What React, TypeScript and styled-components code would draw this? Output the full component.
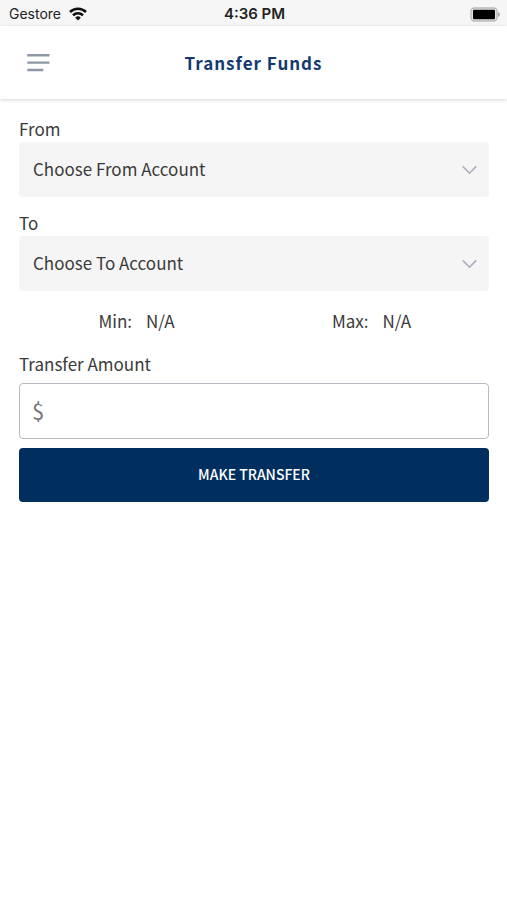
import React, { useState } from "react";
import styled, { createGlobalStyle } from "styled-components";

const GlobalStyle = createGlobalStyle`
  *, *::before, *::after { box-sizing: border-box; }
  body {
    margin: 0;
    background: #ffffff;
    color: #3a3a3a;
    font-family: "Noto Sans CJK SC", "Open Sans", sans-serif;
  }
  button, input, select { font: inherit; color: inherit; margin: 0; }
`;

const StatusBar = styled.div`
  display: grid;
  grid-template-columns: 1fr auto 1fr;
  align-items: center;
  height: 26px;
  padding: 2px 7px 0 9px;
  background: #f6f6f6;
  color: #222222;
  font-family: Inter, sans-serif;
  font-size: 14px;
  line-height: 20px;
`;

const Carrier = styled.div`
  display: flex;
  align-items: center;
  gap: 8px;
`;

const Clock = styled.time`
  font-size: 15px;
  font-weight: 600;
`;

const Battery = styled.svg`
  justify-self: end;
`;

const Header = styled.header`
  display: grid;
  grid-template-columns: 1fr auto 1fr;
  align-items: center;
  height: 73px;
  padding: 0 19px;
  background: #ffffff;
  box-shadow: 0 1px 4px rgba(0, 0, 0, 0.16);
`;

const MenuButton = styled.button`
  display: flex;
  justify-self: start;
  padding: 8px;
  border: 0;
  background: none;
  cursor: pointer;
`;

const Title = styled.h1`
  margin: 0;
  color: #123a70;
  font-size: 17px;
  font-weight: 700;
  line-height: 26px;
  letter-spacing: 1px;
`;

const Form = styled.form`
  display: flex;
  flex-direction: column;
  padding: 18px 18px 0 19px;
`;

const Field = styled.div`
  display: flex;
  flex-direction: column;
  gap: 2px;
  margin-bottom: 14px;
`;

const Label = styled.label`
  font-size: 17px;
  line-height: 23px;
`;

const SelectBox = styled.div`
  display: grid;
  align-items: center;

  > * { grid-area: 1 / 1; }
  > svg { justify-self: end; margin-right: 12px; pointer-events: none; }
`;

const Select = styled.select`
  width: 100%;
  height: 55px;
  padding: 0 40px 2px 14px;
  border: 0;
  border-radius: 4px;
  appearance: none;
  background: #f5f5f5;
  font-size: 17px;
`;

const Limits = styled.dl`
  display: grid;
  grid-template-columns: 1fr 1fr;
  margin: 4px 0 20px;
  font-size: 17px;
  line-height: 23px;
`;

const Limit = styled.div`
  display: flex;
  justify-content: center;
  gap: 14px;
  dt, dd { margin: 0; }
`;

const AmountBox = styled.div`
  display: flex;
  align-items: center;
  height: 56px;
  margin: 8px 0 9px;
  padding: 0 12px 2px;
  gap: 8px;
  border: 1px solid #b5b9c0;
  border-radius: 4px;
  color: #777777;
  font-size: 22px;
`;

const AmountInput = styled.input`
  flex: 1;
  min-width: 0;
  border: 0;
  outline: 0;
  background: none;
`;

const SubmitButton = styled.button`
  height: 54px;
  padding: 0 0 2px;
  border: 0;
  border-radius: 4px;
  background: #002e5f;
  color: #ffffff;
  font-size: 14px;
  font-weight: 500;
  cursor: pointer;
`;

const Chevron = () => (
  <svg width="15" height="10" viewBox="0 0 15 10" fill="none" stroke="#a9acb8" strokeWidth="1.5" aria-hidden="true">
    <path d="M0.8 1.4 7.5 8.2 14.2 1.4" />
  </svg>
);

type AccountSelectProps = { id: string; label: string; placeholder: string };

const AccountSelect = ({ id, label, placeholder }: AccountSelectProps) => (
  <Field>
    <Label htmlFor={id}>{label}</Label>
    <SelectBox>
      <Select id={id} defaultValue="">
        <option value="">{placeholder}</option>
      </Select>
      <Chevron />
    </SelectBox>
  </Field>
);

export default function App() {
  const [amount, setAmount] = useState("");
  return (
    <>
      <GlobalStyle />
      <StatusBar>
        <Carrier>
          Gestore
          <svg width="18" height="14" viewBox="0 0 18 14" fill="none" stroke="#111111" strokeWidth="2.6" aria-label="Wi-Fi">
            <path d="M1 5A11.3 11.3 0 0 1 17 5M4 8.4A7 7 0 0 1 14 8.4" />
            <path d="M9 13.5 6.2 10.7A4 4 0 0 1 11.8 10.7Z" fill="#111111" stroke="none" />
          </svg>
        </Carrier>
        <Clock>4:36 PM</Clock>
        <Battery width="30" height="15" viewBox="0 0 30 15" aria-label="Battery">
          <rect x="1" y="1" width="26" height="13" rx="3.5" fill="#e4e4e4" stroke="#b9b9b9" strokeWidth="1.4" />
          <rect x="3" y="2.8" width="22" height="9.4" rx="1.2" fill="#000000" />
          <path d="M28 5a2.6 2.6 0 0 1 0 5Z" fill="#a9a9a9" />
        </Battery>
      </StatusBar>
      <Header>
        <MenuButton type="button" aria-label="Open menu">
          <svg width="23" height="19" viewBox="0 0 23 19" stroke="#8d97a6" strokeWidth="2.4" aria-hidden="true">
            <path d="M0.3 2.2H22.5M0.3 9.6H22.5M0.3 17H16.3" />
          </svg>
        </MenuButton>
        <Title>Transfer Funds</Title>
      </Header>
      <Form onSubmit={(event) => event.preventDefault()}>
        <AccountSelect id="from" label="From" placeholder="Choose From Account" />
        <AccountSelect id="to" label="To" placeholder="Choose To Account" />
        <Limits>
          <Limit><dt>Min:</dt><dd>N/A</dd></Limit>
          <Limit><dt>Max:</dt><dd>N/A</dd></Limit>
        </Limits>
        <Label htmlFor="amount">Transfer Amount</Label>
        <AmountBox>
          <span>$</span>
          <AmountInput
            id="amount"
            inputMode="decimal"
            value={amount}
            onChange={(event) => setAmount(event.target.value)}
          />
        </AmountBox>
        <SubmitButton type="submit">MAKE TRANSFER</SubmitButton>
      </Form>
    </>
  );
}
